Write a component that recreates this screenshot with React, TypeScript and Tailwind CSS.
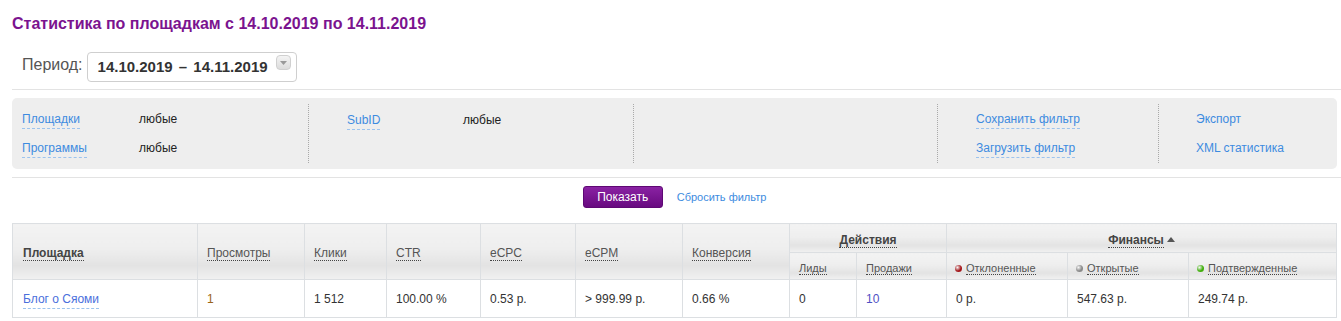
import React from "react";

const font = { fontFamily: '"Liberation Sans", Arial, sans-serif' };

function HeadLabel({ children, bold = false }: { children: React.ReactNode; bold?: boolean }) {
  return (
    <span
      className={
        "border-b border-dotted border-[#444] leading-[13px] " +
        (bold ? "font-bold text-[#444]" : "text-[#555]")
      }
    >
      {children}
    </span>
  );
}

function PanelLink({ children }: { children: React.ReactNode }) {
  return (
    <span className="text-[#3d8be0] border-b border-dashed border-[#9cc3ee] leading-[14px] pb-[2px]">
      {children}
    </span>
  );
}

function Dot({ color }: { color: string }) {
  return (
    <span
      className="inline-block w-[7px] h-[7px] rounded-full mr-[4px] align-[0px]"
      style={{ background: `radial-gradient(circle at 35% 35%, #ffffff88 0%, ${color} 55%)` }}
    />
  );
}

const th =
  "border border-[#dcdfe2] bg-[linear-gradient(to_bottom,#f3f3f3_0%,#eeeeee_45%,#e3e3e3_75%,#f1f1f1_100%)] font-normal px-[9px] align-middle";

const td = "border border-[#dcdfe2] px-[9px]";

export default function App() {
  return (
    <div className="w-[1341px] bg-white text-[12px] text-[#333]" style={font}>
      <div className="pl-[12px]">
        <h1 className="pt-[14px] text-[16px] font-bold text-[#7b138f] leading-[20px]">
          Статистика по площадкам с 14.10.2019 по 14.11.2019
        </h1>

        <div className="flex items-center mt-[18px] pl-[10px] h-[30px]">
          <span className="text-[16px] text-[#555] mr-[4px] -mt-[4px]">Период:</span>
          <div className="flex items-center w-[210px] h-[30px] border border-[#cfcfcf] rounded-[4px] pl-[10px] pr-[5px] bg-white">
            <span className="text-[15px] font-bold text-[#333] flex-1">
              14.10.2019 <span className="mx-[2px]">–</span> 14.11.2019
            </span>
            <span className="w-[15px] h-[15px] rounded-[4px] border border-[#d0d0d0] bg-[linear-gradient(to_bottom,#f4f4f4,#dcdcdc)] flex items-center justify-center -mt-[9px]">
              <svg width="7" height="4" viewBox="0 0 7 4">
                <path d="M0 0 L7 0 L3.5 4 Z" fill="#999" />
              </svg>
            </span>
          </div>
        </div>

        <div className="h-px bg-[#e3e3e3] mt-[7px]" />

        <div className="mt-[8px] w-[1325px] h-[71px] bg-[#eeeeee] rounded-[5px] flex py-[6px]">
          <div className="w-[297px] border-r border-dotted border-[#a9a9a9] pl-[10px] flex flex-col justify-center gap-[11px]">
            <div className="flex">
              <span className="w-[117px]"><PanelLink>Площадки</PanelLink></span>
              <span className="text-[#222]">любые</span>
            </div>
            <div className="flex">
              <span className="w-[117px]"><PanelLink>Программы</PanelLink></span>
              <span className="text-[#222]">любые</span>
            </div>
          </div>
          <div className="w-[325px] border-r border-dotted border-[#a9a9a9] pl-[38px] flex flex-col pt-[7px]">
            <div className="flex">
              <span className="w-[116px]"><PanelLink>SubID</PanelLink></span>
              <span className="text-[#222]">любые</span>
            </div>
          </div>
          <div className="w-[304px] border-r border-dotted border-[#a9a9a9]" />
          <div className="w-[221px] border-r border-dotted border-[#a9a9a9] pl-[38px] flex flex-col justify-center gap-[11px]">
            <div><PanelLink>Сохранить фильтр</PanelLink></div>
            <div><PanelLink>Загрузить фильтр</PanelLink></div>
          </div>
          <div className="flex-1 pl-[37px] flex flex-col justify-center gap-[15px] text-[#3d8be0] leading-[14px]">
            <div>Экспорт</div>
            <div>XML статистика</div>
          </div>
        </div>

        <div className="h-px bg-[#e3e3e3] mt-[8px]" />

        <div className="w-[1325px] flex items-center justify-center mt-[8px] h-[22px]">
          <button className="w-[80px] h-[22px] rounded-[3px] bg-[linear-gradient(to_bottom,#8a22a3,#680a80)] text-white text-[12px] border border-[#5e0874]">
            Показать
          </button>
          <span className="ml-[14px] text-[11px] text-[#3d8be0]">Сбросить фильтр</span>
        </div>

        <table className="mt-[15px] w-[1324px] table-fixed border-collapse text-[12px]">
          <colgroup>
            <col className="w-[185px]" />
            <col className="w-[107px]" />
            <col className="w-[82px]" />
            <col className="w-[94px]" />
            <col className="w-[95px]" />
            <col className="w-[107px]" />
            <col className="w-[107px]" />
            <col className="w-[67px]" />
            <col className="w-[90px]" />
            <col className="w-[121px]" />
            <col className="w-[121px]" />
            <col className="w-[148px]" />
          </colgroup>
          <thead>
            <tr className="h-[29px]">
              <th rowSpan={2} className={th + " text-left pl-[10px] pt-[3px]"}>
                <HeadLabel bold>Площадка</HeadLabel>
              </th>
              <th rowSpan={2} className={th + " text-left pt-[3px]"}><HeadLabel>Просмотры</HeadLabel></th>
              <th rowSpan={2} className={th + " text-left pt-[3px]"}><HeadLabel>Клики</HeadLabel></th>
              <th rowSpan={2} className={th + " text-left pt-[3px]"}><HeadLabel>CTR</HeadLabel></th>
              <th rowSpan={2} className={th + " text-left pt-[3px]"}><HeadLabel>eCPC</HeadLabel></th>
              <th rowSpan={2} className={th + " text-left pt-[3px]"}><HeadLabel>eCPM</HeadLabel></th>
              <th rowSpan={2} className={th + " text-left pt-[3px]"}><HeadLabel>Конверсия</HeadLabel></th>
              <th colSpan={2} className={th + " text-center pt-[3px]"}>
                <HeadLabel bold>Действия</HeadLabel>
              </th>
              <th colSpan={3} className={th + " text-center pt-[3px]"}>
                <HeadLabel bold>Финансы</HeadLabel>
                <svg width="8" height="5" viewBox="0 0 8 5" className="inline-block ml-[3px] align-[2px]">
                  <path d="M0 5 L4 0 L8 5 Z" fill="#555" />
                </svg>
              </th>
            </tr>
            <tr className="h-[27px] text-[11px]">
              <th className={th + " text-left pt-[4px]"}><HeadLabel>Лиды</HeadLabel></th>
              <th className={th + " text-left pt-[4px]"}><HeadLabel>Продажи</HeadLabel></th>
              <th className={th + " text-left pt-[4px] pl-[8px]"}><Dot color="#a4161a" /><HeadLabel>Отклоненные</HeadLabel></th>
              <th className={th + " text-left pt-[4px] pl-[8px]"}><Dot color="#8a8a8a" /><HeadLabel>Открытые</HeadLabel></th>
              <th className={th + " text-left pt-[4px] pl-[8px]"}><Dot color="#3fae0a" /><HeadLabel>Подтвержденные</HeadLabel></th>
            </tr>
          </thead>
          <tbody>
            <tr className="h-[38px]">
              <td className="border border-[#dcdfe2] pl-[10px]">
                <span className="text-[#4a6fdc] border-b border-dashed border-[#9cc3ee] pb-[2px]">Блог о Сяоми</span>
              </td>
              <td className={td + " text-[#9a6416]"}>1</td>
              <td className={td}>1 512</td>
              <td className={td}>100.00 %</td>
              <td className={td}>0.53 р.</td>
              <td className={td}>&gt; 999.99 р.</td>
              <td className={td}>0.66 %</td>
              <td className={td}>0</td>
              <td className={td + " text-[#4f4fc4]"}>10</td>
              <td className={td}>0 р.</td>
              <td className={td}>547.63 р.</td>
              <td className={td}>249.74 р.</td>
            </tr>
          </tbody>
        </table>
      </div>
    </div>
  );
}
